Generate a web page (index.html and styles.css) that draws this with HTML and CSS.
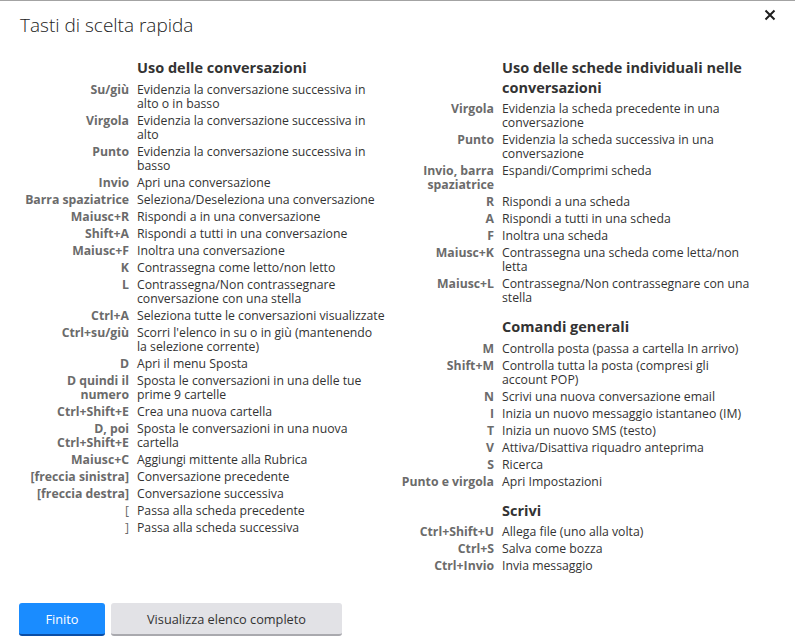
FILE: index.html
```html
<!DOCTYPE html>
<html lang="it">
<head>
<meta charset="utf-8">
<title>Tasti di scelta rapida</title>
<link rel="stylesheet" href="styles.css">
</head>
<body>
<div class="dialog">
  <header class="header">
    <h1 class="title">Tasti di scelta rapida</h1>
    <button class="close" aria-label="Chiudi">
      <svg width="12" height="12" viewBox="0 0 12 12"><path d="M1.5 1.5 L10.5 10.5 M10.5 1.5 L1.5 10.5" stroke="#1e1e1e" stroke-width="2" fill="none"/></svg>
    </button>
  </header>
  <main class="content">
    <div class="col col-left">
      <section class="section">
        <h2 class="sec-title">Uso delle conversazioni</h2>
        <dl class="list">
          <dt>Su/giù</dt><dd>Evidenzia la conversazione successiva in alto o in basso</dd>
          <dt>Virgola</dt><dd>Evidenzia la conversazione successiva in alto</dd>
          <dt>Punto</dt><dd>Evidenzia la conversazione successiva in basso</dd>
          <dt>Invio</dt><dd>Apri una conversazione</dd>
          <dt>Barra spaziatrice</dt><dd>Seleziona/Deseleziona una conversazione</dd>
          <dt>Maiusc+R</dt><dd>Rispondi a in una conversazione</dd>
          <dt>Shift+A</dt><dd>Rispondi a tutti in una conversazione</dd>
          <dt>Maiusc+F</dt><dd>Inoltra una conversazione</dd>
          <dt>K</dt><dd>Contrassegna come letto/non letto</dd>
          <dt>L</dt><dd>Contrassegna/Non contrassegnare conversazione con una stella</dd>
          <dt>Ctrl+A</dt><dd>Seleziona tutte le conversazioni visualizzate</dd>
          <dt>Ctrl+su/giù</dt><dd>Scorri l'elenco in su o in giù (mantenendo la selezione corrente)</dd>
          <dt>D</dt><dd>Apri il menu Sposta</dd>
          <dt>D quindi il numero</dt><dd>Sposta le conversazioni in una delle tue prime 9 cartelle</dd>
          <dt>Ctrl+Shift+E</dt><dd>Crea una nuova cartella</dd>
          <dt>D, poi Ctrl+Shift+E</dt><dd>Sposta le conversazioni in una nuova cartella</dd>
          <dt>Maiusc+C</dt><dd>Aggiungi mittente alla Rubrica</dd>
          <dt>[freccia sinistra]</dt><dd>Conversazione precedente</dd>
          <dt>[freccia destra]</dt><dd>Conversazione successiva</dd>
          <dt class="plain">[</dt><dd>Passa alla scheda precedente</dd>
          <dt class="plain">]</dt><dd>Passa alla scheda successiva</dd>
        </dl>
      </section>
    </div>
    <div class="col col-right">
      <section class="section">
        <h2 class="sec-title">Uso delle schede individuali nelle conversazioni</h2>
        <dl class="list">
          <dt>Virgola</dt><dd>Evidenzia la scheda precedente in una conversazione</dd>
          <dt>Punto</dt><dd>Evidenzia la scheda successiva in una conversazione</dd>
          <dt>Invio, barra spaziatrice</dt><dd>Espandi/Comprimi scheda</dd>
          <dt>R</dt><dd>Rispondi a una scheda</dd>
          <dt>A</dt><dd>Rispondi a tutti in una scheda</dd>
          <dt>F</dt><dd>Inoltra una scheda</dd>
          <dt>Maiusc+K</dt><dd>Contrassegna una scheda come letta/non letta</dd>
          <dt>Maiusc+L</dt><dd>Contrassegna/Non contrassegnare con una stella</dd>
        </dl>
      </section>
      <section class="section">
        <h2 class="sec-title">Comandi generali</h2>
        <dl class="list">
          <dt>M</dt><dd>Controlla posta (passa a cartella In arrivo)</dd>
          <dt>Shift+M</dt><dd>Controlla tutta la posta (compresi gli account POP)</dd>
          <dt>N</dt><dd>Scrivi una nuova conversazione email</dd>
          <dt>I</dt><dd>Inizia un nuovo messaggio istantaneo (IM)</dd>
          <dt>T</dt><dd>Inizia un nuovo SMS (testo)</dd>
          <dt>V</dt><dd>Attiva/Disattiva riquadro anteprima</dd>
          <dt>S</dt><dd>Ricerca</dd>
          <dt>Punto e virgola</dt><dd>Apri Impostazioni</dd>
        </dl>
      </section>
      <section class="section">
        <h2 class="sec-title">Scrivi</h2>
        <dl class="list">
          <dt>Ctrl+Shift+U</dt><dd>Allega file (uno alla volta)</dd>
          <dt>Ctrl+S</dt><dd>Salva come bozza</dd>
          <dt>Ctrl+Invio</dt><dd>Invia messaggio</dd>
        </dl>
      </section>
    </div>
  </main>
  <footer class="footer">
    <button class="btn btn-primary">Finito</button>
    <button class="btn btn-secondary">Visualizza elenco completo</button>
  </footer>
</div>
</body>
</html>
```

FILE: styles.css
```css
* { box-sizing: border-box; }
html, body { margin: 0; padding: 0; background: #fff; }
body {
  font-family: "Open Sans", "Noto Sans", "Liberation Sans", sans-serif;
  color: #333;
}
.dialog {
  width: 795px;
  height: 642px;
  border-top: 1px solid #a3a3a3;
  display: flex;
  flex-direction: column;
}
.header {
  display: flex;
  justify-content: space-between;
  align-items: flex-start;
  padding: 10px 20px 0 20px;
  height: 57px;
  flex: none;
}
.title {
  margin: 0;
  font-size: 19px;
  font-weight: 300;
  line-height: 28px;
  color: #222;
}
.close {
  border: 0;
  background: none;
  padding: 0;
  width: 12px;
  height: 12px;
  position: relative;
  left: 1px;
  top: -2px;
  cursor: pointer;
}
.close svg { display: block; }
.content {
  display: grid;
  grid-template-columns: 365px 365px;
  align-content: start;
  padding-left: 23px;
  flex: 1;
}
.section { margin-bottom: 12px; }
.sec-title {
  margin: 0 0 5px 114px;
  font-size: 14.5px;
  font-weight: 700;
  line-height: 19.5px;
  color: #333;
  width: 250px;
}
.list {
  display: grid;
  grid-template-columns: 106px 248px;
  column-gap: 8px;
  row-gap: 3px;
  margin: 0;
  font-size: 12.25px;
  line-height: 14px;
}
.list dt {
  text-align: right;
  font-weight: 700;
  color: #6b6b6b;
}
.list dt.plain { font-weight: 400; }
.list dd {
  margin: 0;
  color: #333;
}
.footer {
  display: flex;
  gap: 6px;
  padding: 0 0 6px 19px;
  flex: none;
}
.btn {
  height: 33px;
  border: 0;
  border-radius: 3px;
  font-family: inherit;
  font-size: 12.75px;
  padding: 0;
  cursor: pointer;
}
.btn-primary {
  width: 86px;
  background: #1a8cff;
  color: #fff;
  border-bottom: 2px solid #0a4ea6;
}
.btn-secondary {
  width: 231px;
  background: #e2e2e6;
  color: #333;
  border-bottom: 2px solid #a9a9ae;
}
```
